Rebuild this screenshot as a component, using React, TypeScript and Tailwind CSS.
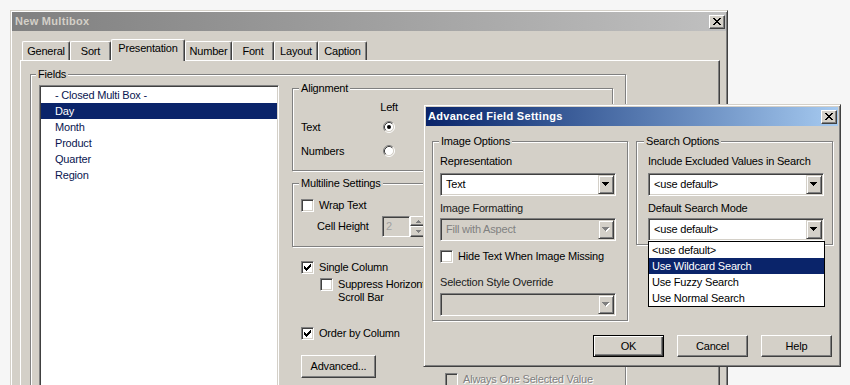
import React from 'react';

const raisedBtn =
  'border border-t-white border-l-white border-r-[#404040] border-b-[#404040] bg-[#d4d0c8] shadow-[inset_-1px_-1px_0_#808080]';
const sunken =
  'border border-t-[#808080] border-l-[#808080] border-r-white border-b-white shadow-[inset_1px_1px_0_#404040,inset_-1px_-1px_0_#d4d0c8]';
const etched = 'relative border border-[#808080] shadow-[inset_1px_1px_0_#fff,1px_1px_0_#fff]';

function XGlyph() {
  return (
    <svg width="8" height="7" viewBox="0 0 8 7" shapeRendering="crispEdges">
      <path
        fill="#000"
        d="M0 0h2v1h-2z M6 0h2v1h-2z M1 1h2v1h-2z M5 1h2v1h-2z M2 2h4v1h-4z M3 3h2v1h-2z M2 4h4v1h-4z M1 5h2v1h-2z M5 5h2v1h-2z M0 6h2v1h-2z M6 6h2v1h-2z"
      />
    </svg>
  );
}

function CloseBtn() {
  return (
    <div className="flex h-[14px] w-[16px] items-center justify-center border border-t-white border-l-white border-r-[#404040] border-b-[#404040] bg-[#d4d0c8] shadow-[inset_-1px_-1px_0_#808080]">
      <XGlyph />
    </div>
  );
}

function ArrowDown({ disabled }: { disabled?: boolean }) {
  return (
    <svg width="8" height="5" viewBox="0 0 8 5" shapeRendering="crispEdges">
      {disabled && <path fill="#fff" d="M1 1h7v1h-7z M2 2h5v1h-5z M3 3h3v1h-3z M4 4h1v1h-1z" />}
      <path
        fill={disabled ? '#808080' : '#000'}
        d="M0 0h7v1h-7z M1 1h5v1h-5z M2 2h3v1h-3z M3 3h1v1h-1z"
      />
    </svg>
  );
}

function SmallArrow({ up }: { up?: boolean }) {
  return (
    <svg width="5" height="3" viewBox="0 0 5 3" shapeRendering="crispEdges">
      <path
        fill="#808080"
        d={up ? 'M2 0h1v1h-1z M1 1h3v1h-3z M0 2h5v1h-5z' : 'M0 0h5v1h-5z M1 1h3v1h-3z M2 2h1v1h-1z'}
      />
    </svg>
  );
}

function CheckGlyph() {
  return (
    <svg width="7" height="7" viewBox="0 0 7 7" shapeRendering="crispEdges">
      <path
        fill="#000"
        d="M6 0h1v1h-1z M5 1h2v1h-2z M0 2h1v1h-1z M4 2h3v1h-3z M0 3h2v1h-2z M3 3h3v1h-3z M0 4h5v1h-5z M1 5h3v1h-3z M2 6h1v1h-1z"
      />
    </svg>
  );
}

function CheckBox({ checked, disabled }: { checked?: boolean; disabled?: boolean }) {
  return (
    <div
      className={`flex h-[13px] w-[13px] shrink-0 items-center justify-center ${sunken} ${
        disabled ? 'bg-[#d4d0c8]' : 'bg-white'
      }`}
    >
      {checked && <CheckGlyph />}
    </div>
  );
}

function Radio({ checked }: { checked?: boolean }) {
  return (
    <svg width="12" height="12" viewBox="0 0 12 12">
      <circle cx="6" cy="6" r="4.5" fill="#fff" />
      <path d="M2.11 9.89A5.5 5.5 0 0 1 9.89 2.11" fill="none" stroke="#808080" />
      <path d="M9.89 2.11A5.5 5.5 0 0 1 2.11 9.89" fill="none" stroke="#fff" />
      <path d="M2.82 9.18A4.5 4.5 0 0 1 9.18 2.82" fill="none" stroke="#404040" />
      <path d="M9.18 2.82A4.5 4.5 0 0 1 2.82 9.18" fill="none" stroke="#d4d0c8" />
      {checked && <circle cx="6" cy="6" r="2" fill="#000" />}
    </svg>
  );
}

function Combo({ value, disabled }: { value?: string; disabled?: boolean }) {
  return (
    <div
      className={`flex h-[23px] w-[176px] items-center p-[1px] ${sunken} ${
        disabled ? 'bg-[#d4d0c8]' : 'bg-white'
      }`}
    >
      <div
        className={`flex-1 whitespace-nowrap pl-[4px] leading-[19px] ${
          disabled ? 'text-[#808080]' : 'text-black'
        }`}
      >
        {value}
      </div>
      <div className="flex h-[19px] w-[16px] items-center justify-center border border-t-[#d4d0c8] border-l-[#d4d0c8] border-r-[#404040] border-b-[#404040] bg-[#d4d0c8] shadow-[inset_1px_1px_0_#fff,inset_-1px_-1px_0_#808080]">
        <ArrowDown disabled={disabled} />
      </div>
    </div>
  );
}

function GroupLabel({ children, className }: { children: React.ReactNode; className: string }) {
  return (
    <span className={`absolute -top-[7px] whitespace-nowrap bg-[#d4d0c8] px-[2px] leading-[13px] ${className}`}>
      {children}
    </span>
  );
}

function Tab({ label, className, selected }: { label: string; className: string; selected?: boolean }) {
  if (selected) {
    return (
      <div
        className={`relative z-10 -mb-[1px] flex h-[22px] items-start justify-center rounded-t-[2px] border-l border-t border-r border-l-white border-t-white border-r-[#404040] bg-[#d4d0c8] pt-[2px] leading-[13px] shadow-[inset_-1px_0_0_#808080] ${className}`}
      >
        {label}
      </div>
    );
  }
  return (
    <div
      className={`flex h-[19px] items-center justify-center rounded-t-[2px] border-l border-t border-r border-l-white border-t-white border-r-[#404040] leading-[13px] shadow-[inset_-1px_0_0_#808080] ${className}`}
    >
      {label}
    </div>
  );
}

function ListItem({ children, selected }: { children: React.ReactNode; selected?: boolean }) {
  return (
    <div
      className={`h-[16px] whitespace-nowrap pl-[14px] leading-[16px] ${
        selected ? 'bg-[#0a246a] text-white' : 'text-[#0a1650]'
      }`}
    >
      {children}
    </div>
  );
}

export default function App() {
  return (
    <div className="relative h-[385px] w-[850px] overflow-hidden bg-[#f6f6f6] pl-[10px] pt-[10px] font-['Liberation_Sans',Arial,sans-serif] text-[11px] tracking-[-0.2px] text-black">
      {/* Main window */}
      <div className="h-[420px] w-[718px] border border-t-[#d4d0c8] border-l-[#d4d0c8] border-r-[#404040] border-b-[#404040] bg-[#d4d0c8] p-[1px] shadow-[inset_1px_1px_0_#fff,inset_-1px_-1px_0_#808080]">
        <div className="flex h-[19px] items-center justify-between bg-linear-to-r from-[#808080] to-[#c0c0c0] pl-[3px] pr-[1px]">
          <span className="font-bold tracking-[0.3px] text-[#d4d0c8]">New Multibox</span>
          <CloseBtn />
        </div>

        <div className="pl-[8px] pt-[8px]">
          {/* tabs */}
          <div className="ml-[2px] flex h-[21px] items-end">
            <Tab label="General" className="w-[48px]" />
            <Tab label="Sort" className="w-[41px]" />
            <Tab label="Presentation" className="w-[74px]" selected />
            <Tab label="Number" className="w-[47px]" />
            <Tab label="Font" className="w-[42px]" />
            <Tab label="Layout" className="w-[44px]" />
            <Tab label="Caption" className="w-[49px]" />
          </div>

          {/* tab panel */}
          <div className="h-[340px] w-[700px] border border-t-white border-l-white border-r-[#404040] border-b-[#404040] pl-[9px] pt-[13px] shadow-[inset_-1px_-1px_0_#808080]">
            <div className={`${etched} h-[330px] w-[596px]`}>
              <GroupLabel className="left-[5px]">Fields</GroupLabel>
              <div className="flex pl-[8px] pt-[10px]">
                {/* list box */}
                <div className={`h-[320px] w-[240px] bg-white p-[1px] ${sunken}`}>
                  <ListItem>- Closed Multi Box -</ListItem>
                  <ListItem selected>Day</ListItem>
                  <ListItem>Month</ListItem>
                  <ListItem>Product</ListItem>
                  <ListItem>Quarter</ListItem>
                  <ListItem>Region</ListItem>
                </div>

                {/* right column */}
                <div className="ml-[13px] mt-[3px] w-[321px]">
                  {/* Alignment */}
                  <div className={`${etched} h-[83px] w-[321px]`}>
                    <GroupLabel className="left-[6px]">Alignment</GroupLabel>
                    <div className="pl-[8px] pt-[11px]">
                      <div className="flex h-[15px] items-center">
                        <div className="w-[59px]" />
                        <div className="w-[58px] text-center">Left</div>
                      </div>
                      <div className="flex h-[24px] items-center">
                        <div className="w-[59px]">Text</div>
                        <div className="flex w-[58px] justify-center">
                          <Radio checked />
                        </div>
                        <div className="flex w-[58px] justify-center">
                          <Radio />
                        </div>
                        <div className="flex w-[58px] justify-center">
                          <Radio />
                        </div>
                      </div>
                      <div className="flex h-[24px] items-center">
                        <div className="w-[59px]">Numbers</div>
                        <div className="flex w-[58px] justify-center">
                          <Radio />
                        </div>
                        <div className="flex w-[58px] justify-center">
                          <Radio checked />
                        </div>
                        <div className="flex w-[58px] justify-center">
                          <Radio />
                        </div>
                      </div>
                    </div>
                  </div>

                  {/* Multiline */}
                  <div className={`${etched} mt-[12px] h-[64px] w-[321px]`}>
                    <GroupLabel className="left-[6px]">Multiline Settings</GroupLabel>
                    <div className="pl-[8px] pt-[15px]">
                      <div className="flex h-[13px] items-center">
                        <CheckBox />
                        <span className="ml-[5px] leading-[13px]">Wrap Text</span>
                      </div>
                      <div className="mt-[4px] flex h-[21px] items-center">
                        <div className="ml-[16px] w-[65px] leading-[13px]">Cell Height</div>
                        <div className={`h-[21px] w-[28px] bg-[#d4d0c8] pl-[3px] leading-[19px] text-[#a0a0a0] ${sunken}`}>
                          2
                        </div>
                        <div className="flex h-[21px] w-[16px] flex-col">
                          <div className={`flex h-[10px] items-center justify-center ${raisedBtn}`}>
                            <SmallArrow up />
                          </div>
                          <div className={`flex h-[11px] items-center justify-center ${raisedBtn}`}>
                            <SmallArrow />
                          </div>
                        </div>
                      </div>
                    </div>
                  </div>

                  {/* checkbox options */}
                  <div className="mt-[14px] flex pl-[9px]">
                    <div className="w-[144px]">
                      <div className="flex h-[13px] items-center">
                        <CheckBox checked />
                        <span className="ml-[5px] whitespace-nowrap leading-[13px]">Single Column</span>
                      </div>
                      <div className="ml-[19px] mt-[4px] flex items-start">
                        <CheckBox />
                        <div className="ml-[5px] whitespace-nowrap leading-[13px]">
                          <div>Suppress Horizontal</div>
                          <div>Scroll Bar</div>
                        </div>
                      </div>
                      <div className="mt-[23px] flex h-[13px] items-center">
                        <CheckBox checked />
                        <span className="ml-[5px] whitespace-nowrap leading-[13px]">Order by Column</span>
                      </div>
                      <div
                        className={`mt-[15px] flex h-[23px] w-[75px] items-center justify-center ${raisedBtn}`}
                      >
                        Advanced...
                      </div>
                    </div>
                    <div className="pt-[112px]">
                      <div className="flex h-[13px] items-center">
                        <CheckBox disabled />
                        <span className="ml-[5px] whitespace-nowrap leading-[13px] text-[#808080] [text-shadow:1px_1px_0_#fff]">
                          Always One Selected Value
                        </span>
                      </div>
                    </div>
                  </div>
                </div>
              </div>
            </div>
          </div>
        </div>
      </div>

      {/* Advanced Field Settings dialog */}
      <div className="absolute left-[423px] top-[104px] h-[263px] w-[418px] border border-t-[#d4d0c8] border-l-[#d4d0c8] border-r-[#404040] border-b-[#404040] bg-[#d4d0c8] p-[2px] shadow-[inset_1px_1px_0_#fff,inset_-1px_-1px_0_#808080]">
        <div className="flex h-[19px] items-center justify-between bg-linear-to-r from-[#0a246a] to-[#a6caf0] pl-[2px] pr-[1px]">
          <span className="font-bold tracking-[0.3px] text-white">Advanced Field Settings</span>
          <CloseBtn />
        </div>

        <div className="flex pl-[6px] pt-[15px]">
          {/* Image Options */}
          <div className={`${etched} h-[180px] w-[196px]`}>
            <GroupLabel className="left-[6px]">Image Options</GroupLabel>
            <div className="pl-[7px] pt-[13px]">
              <div className="h-[13px] leading-[13px]">Representation</div>
              <div className="mt-[5px]">
                <Combo value="Text" />
              </div>
              <div className="mt-[6px] h-[13px] leading-[13px] text-[#202020]">Image Formatting</div>
              <div className="mt-[3px]">
                <Combo value="Fill with Aspect" disabled />
              </div>
              <div className="mt-[9px] flex h-[13px] items-center">
                <CheckBox />
                <span className="ml-[5px] whitespace-nowrap leading-[13px]">Hide Text When Image Missing</span>
              </div>
              <div className="mt-[13px] h-[13px] leading-[13px] text-[#202020]">Selection Style Override</div>
              <div className="mt-[4px]">
                <Combo disabled />
              </div>
            </div>
          </div>

          {/* Search Options */}
          <div className={`${etched} ml-[8px] h-[104px] w-[197px]`}>
            <GroupLabel className="left-[7px]">Search Options</GroupLabel>
            <div className="pl-[11px] pt-[13px]">
              <div className="h-[13px] whitespace-nowrap leading-[13px]">Include Excluded Values in Search</div>
              <div className="mt-[5px]">
                <Combo value="<use default>" />
              </div>
              <div className="mt-[6px] h-[13px] leading-[13px]">Default Search Mode</div>
              <div className="relative mt-[3px]">
                <Combo value="<use default>" />
                <div className="absolute left-0 top-full z-20 w-[177px] border border-black bg-white">
                  <div className="h-[16px] pl-[3px] leading-[16px]">&lt;use default&gt;</div>
                  <div className="h-[16px] bg-[#0a246a] pl-[3px] leading-[16px] text-white">Use Wildcard Search</div>
                  <div className="h-[16px] pl-[3px] leading-[16px]">Use Fuzzy Search</div>
                  <div className="h-[16px] pl-[3px] leading-[16px]">Use Normal Search</div>
                </div>
              </div>
            </div>
          </div>
        </div>

        {/* buttons */}
        <div className="mt-[14px] flex justify-end gap-[13px] pr-[6px]">
          <div className="flex h-[22px] w-[71px] items-center justify-center border border-black bg-[#d4d0c8] shadow-[inset_1px_1px_0_#fff,inset_-1px_-1px_0_#404040,inset_-2px_-2px_0_#808080]">
            OK
          </div>
          <div className={`flex h-[22px] w-[71px] items-center justify-center ${raisedBtn}`}>Cancel</div>
          <div className={`flex h-[22px] w-[71px] items-center justify-center ${raisedBtn}`}>Help</div>
        </div>
      </div>
    </div>
  );
}
